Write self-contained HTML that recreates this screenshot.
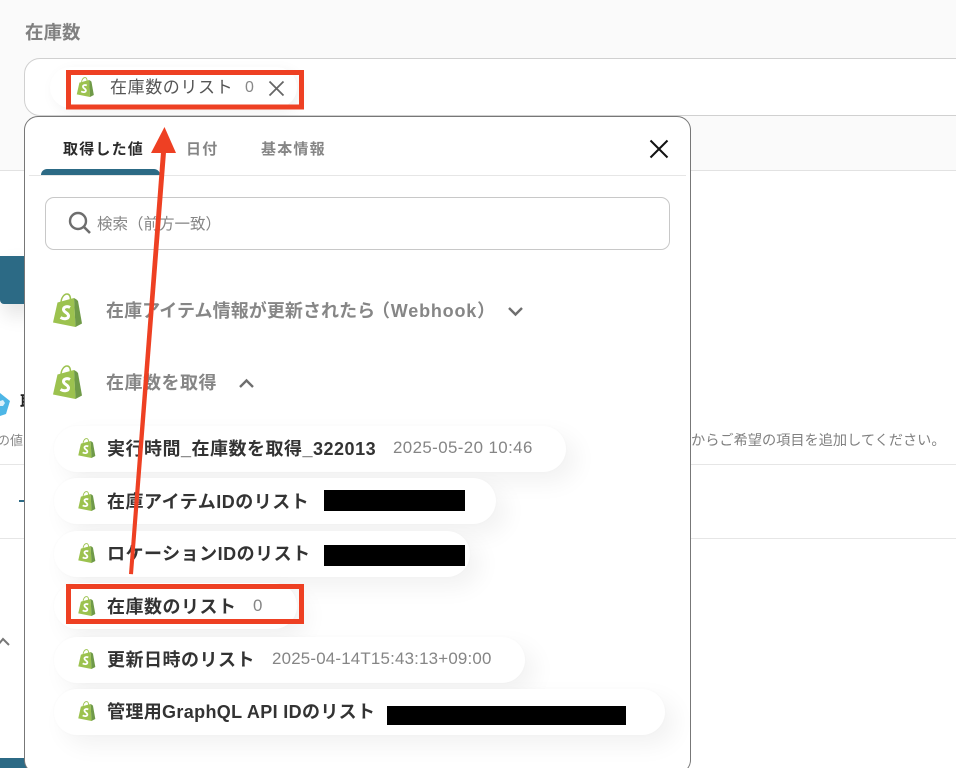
<!DOCTYPE html>
<html lang="ja"><head><meta charset="utf-8"><title>在庫数</title>
<style>
html,body{margin:0;padding:0;background:#fff}
#p{position:relative;width:956px;height:768px;overflow:hidden;background:#fff;font-family:"Liberation Sans","Noto Sans CJK JP",sans-serif}
#p div,#p span,#p svg{position:absolute}
.t{white-space:nowrap;line-height:1}
.pill{left:54px;height:46px;background:#fff;border-radius:23px;box-shadow:10px 10px 24px rgba(0,0,0,.055),0 0 3px rgba(0,0,0,.025)}
.n{left:107px;font-size:18px;font-weight:700;color:#333;letter-spacing:.5px}
.v{font-size:16.900px;color:#858585;letter-spacing:.2px}
.k{background:#000}
.h{left:106px;font-size:18px;font-weight:700;color:#868686;letter-spacing:.5px}
.tab{top:142px;font-size:15px;font-weight:700;color:#858585;letter-spacing:1.200px}
</style></head><body>
<div id="p">
<svg width="0" height="0" style="left:0;top:0"><defs>
<symbol id="s" viewBox="0 0 30 34">
<path d="M9 10C9 5 12 1 15 1c2.600 0 3.500 3 3.500 6" fill="none" stroke="#9cc24f" stroke-width="1.500"/>
<path d="M1 29.500 5.500 9.500 22 5 23.500 34Z" fill="#9cc24f"/>
<path d="M22 5l2.500 1.500 1.500 1.500L30 30.500 23.500 34Z" fill="#6f9a48"/>
<path d="M18 14.500C15.500 13 11.500 13.500 11.500 16.500 11.500 19.500 16.500 19.500 16.500 23 16.500 26 12 26.500 8.500 24.500" fill="none" stroke="#fff" stroke-width="3"/>
</symbol></defs></svg>

<div style="left:0;top:0;width:956px;height:170px;background:#fafafa;border-bottom:1px solid #e2e2e2"></div>
<div class="t" style="left:25px;top:24px;font-size:18.500px;font-weight:700;color:#808080">在庫数</div>
<div style="left:24px;top:58px;width:1000px;height:56px;background:#fff;border:1px solid #d0d0d0;border-radius:16px"></div>
<div style="left:50px;top:67px;width:247px;height:41px;background:#fff;border-radius:21px;box-shadow:4px 4px 14px rgba(0,0,0,.06)"></div>
<svg style="left:76px;top:77px" width="18" height="20"><use href="#s"/></svg>
<div class="t" style="left:110px;top:79px;font-size:17px;color:#555;letter-spacing:.6px">在庫数のリスト</div>
<div class="t" style="left:245px;top:80px;font-size:16px;color:#888">0</div>
<svg style="left:268px;top:80px" width="17" height="17" viewBox="0 0 17 17"><path d="M1.500 1.500l14 14M15.500 1.500l-14 14" stroke="#666" stroke-width="1.800" fill="none"/></svg>

<div style="left:0;top:256px;width:30px;height:48px;background:#2c6a85;border-radius:0 0 0 4px;box-shadow:4px 10px 20px rgba(0,0,0,.12)"></div>
<svg style="left:0;top:392px" width="11" height="25" viewBox="0 0 11 25"><path d="M0 1 10 9 6 22 0 24Z" fill="#4db6e6"/><path d="M0 9l3-1 2 3-2 3-3 0Z" fill="#fff" opacity=".8"/></svg>
<div class="t" style="left:20px;top:395px;font-size:16px;font-weight:700;color:#222">取</div>
<div class="t" style="left:-3px;top:434px;font-size:13px;color:#888">の値</div>
<div style="left:0;top:464px;width:956px;height:1px;background:#e6e6e6"></div>
<div style="left:0;top:538px;width:956px;height:1px;background:#e6e6e6"></div>
<div style="left:19px;top:500px;width:6px;height:2px;background:#2c6a85"></div>
<svg style="left:0;top:636px" width="12" height="14" viewBox="0 0 12 14"><path d="M-2 9 3 3l6 6" stroke="#777" stroke-width="2" fill="none"/></svg>
<div style="left:0;top:758px;width:30px;height:10px;background:#2c6a85"></div>
<div class="t" style="left:691px;top:434px;font-size:14.200px;color:#808080">からご希望の項目を追加してください。</div>

<div style="left:24px;top:116px;width:665px;height:656px;background:#fff;border:1px solid #777;border-radius:14px"></div>

<div class="t tab" style="left:63px;color:#2a2a2a">取得した値</div>
<div class="t tab" style="left:186px">日付</div>
<div class="t tab" style="left:261px">基本情報</div>
<div style="left:29px;top:175px;width:657px;height:1px;background:#e6e6e6"></div>
<div style="left:41px;top:169px;width:119px;height:6px;background:#2c6a85;border-radius:6px 6px 0 0"></div>
<svg style="left:649px;top:139px" width="20" height="20" viewBox="0 0 20 20"><path d="M1.500 1.500l17 17M18.500 1.500l-17 17" stroke="#111" stroke-width="2" fill="none"/></svg>

<div style="left:45px;top:197px;width:623px;height:51px;border:1px solid #c8c8c8;border-radius:9px"></div>
<svg style="left:68px;top:211px" width="24" height="24" viewBox="0 0 24 24"><circle cx="10" cy="10" r="8" fill="none" stroke="#6e6e6e" stroke-width="2.400"/><path d="M16 16l6 6" stroke="#6e6e6e" stroke-width="2.600"/></svg>
<div class="t" style="left:97px;top:217px;font-size:15.500px;color:#858585">検索（前方一致）</div>

<svg style="left:52px;top:293px" width="30" height="34"><use href="#s"/></svg>
<div class="t h" style="top:302px;letter-spacing:.07px">在庫アイテム情報が更新されたら</div>
<div class="t h" style="left:372px;top:302px;letter-spacing:.8px">（Webhook）</div>
<svg style="left:507px;top:306px" width="17" height="11" viewBox="0 0 17 11"><path d="M2 2l6.500 6.500L15 2" stroke="#6e6e6e" stroke-width="2.400" fill="none"/></svg>
<svg style="left:52px;top:365px" width="30" height="34"><use href="#s"/></svg>
<div class="t h" style="top:374px">在庫数を取得</div>
<svg style="left:238px;top:378px" width="17" height="11" viewBox="0 0 17 11"><path d="M2 9l6.500-6.500L15 9" stroke="#6e6e6e" stroke-width="2.400" fill="none"/></svg>

<div class="pill" style="top:426px;width:512px"></div>
<div class="pill" style="top:478px;width:442px"></div>
<div class="pill" style="top:531px;width:416px"></div>
<div class="pill" style="top:583px;width:243px"></div>
<div class="pill" style="top:637px;width:471px"></div>
<div class="pill" style="top:689px;width:611px"></div>

<svg style="left:77px;top:438px" width="19" height="20"><use href="#s"/></svg>
<svg style="left:77px;top:491px" width="19" height="20"><use href="#s"/></svg>
<svg style="left:77px;top:543px" width="19" height="20"><use href="#s"/></svg>
<svg style="left:77px;top:596px" width="19" height="20"><use href="#s"/></svg>
<svg style="left:77px;top:649px" width="19" height="20"><use href="#s"/></svg>
<svg style="left:77px;top:701px" width="19" height="20"><use href="#s"/></svg>

<div class="t n" style="top:440px">実行時間_在庫数を取得_322013</div>
<div class="t v" style="left:393px;top:440px;letter-spacing:.4px">2025-05-20 10:46</div>
<div class="t n" style="top:493px">在庫アイテムIDのリスト</div>
<div class="k" style="left:324px;top:490px;width:141px;height:21px"></div>
<div class="t n" style="top:545px">ロケーションIDのリスト</div>
<div class="k" style="left:324px;top:545px;width:141px;height:21px"></div>
<div class="t n" style="top:598px">在庫数のリスト</div>
<div class="t v" style="left:253px;top:598px">0</div>
<div class="t n" style="top:651px">更新日時のリスト</div>
<div class="t v" style="left:272px;top:651px">2025-04-14T15:43:13+09:00</div>
<div class="t n" style="top:703px;letter-spacing:.35px">管理用GraphQL API IDのリスト</div>
<div class="k" style="left:387px;top:706px;width:239px;height:19px"></div>

<svg style="left:0;top:0" width="956" height="768" viewBox="0 0 956 768">
<rect x="68.500" y="72.500" width="233" height="34.500" fill="none" stroke="#ee4023" stroke-width="5"/>
<rect x="68.500" y="586.500" width="233" height="35" fill="none" stroke="#ee4023" stroke-width="5"/>
<path d="M129 574 161 152l5 .5L133 574.300Z" fill="#ee4023"/>
<path d="M164.500 127 176 153 151 153Z" fill="#ee4023"/>
</svg>
</div>
</body></html>
